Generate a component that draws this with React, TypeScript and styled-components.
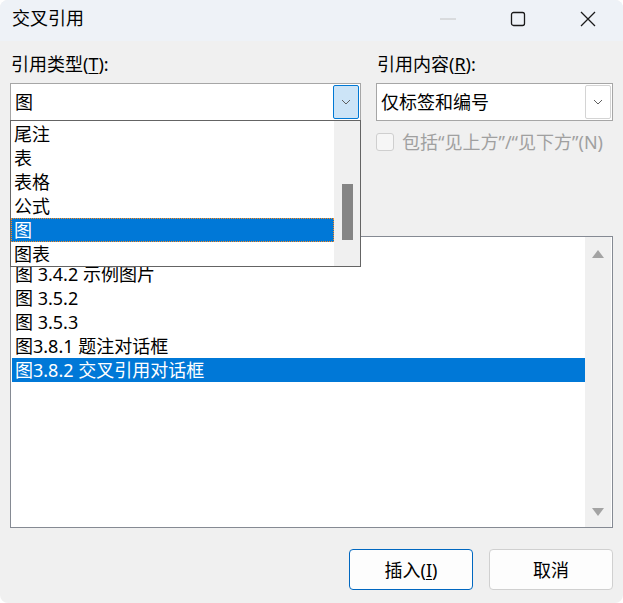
import styled, { createGlobalStyle } from "styled-components";

const GlobalStyle = createGlobalStyle`
  html, body {
    margin: 0;
    padding: 0;
    background: #ffffff;
  }
`;

const typeOptions = ["尾注", "表", "表格", "公式", "图", "图表"];
const captions = [
  "图 3.4.2 示例图片",
  "图 3.5.2",
  "图 3.5.3",
  "图3.8.1 题注对话框",
  "图3.8.2 交叉引用对话框",
];

function Chevron() {
  return (
    <svg width="10" height="6" viewBox="0 0 10 6">
      <path d="M1 1 L5 5 L9 1" fill="none" stroke="#606060" strokeWidth="1" />
    </svg>
  );
}

export default function App() {
  return (
    <>
      <GlobalStyle />
      <Window>
        <TitleBar>
          <Title>交叉引用</Title>
          <CaptionButton>
            <svg width="16" height="2" viewBox="0 0 16 2">
              <line x1="0" y1="1" x2="16" y2="1" stroke="#c4c4c4" strokeWidth="1" />
            </svg>
          </CaptionButton>
          <CaptionButton>
            <svg width="16" height="16" viewBox="0 0 16 16">
              <rect x="1.5" y="1.5" width="13" height="13" rx="2" fill="none" stroke="#1a1a1a" strokeWidth="1.3" />
            </svg>
          </CaptionButton>
          <CaptionButton>
            <svg width="16" height="16" viewBox="0 0 16 16">
              <path d="M1 1 L15 15 M15 1 L1 15" stroke="#1a1a1a" strokeWidth="1.3" />
            </svg>
          </CaptionButton>
        </TitleBar>

        <Body>
          <TopRow>
            <Column $width={351}>
              <Label>
                引用类型(<u>T</u>):
              </Label>
              <Combo>
                <ComboText>图</ComboText>
                <ComboButton $active>
                  <Chevron />
                </ComboButton>
                <Dropdown>
                  <DropItems>
                    {typeOptions.map((o) => (
                      <DropItem key={o} $selected={o === "图"}>
                        {o}
                      </DropItem>
                    ))}
                  </DropItems>
                  <DropScroll>
                    <Thumb />
                  </DropScroll>
                </Dropdown>
              </Combo>
            </Column>
            <Column $width={237}>
              <Label>
                引用内容(<u>R</u>):
              </Label>
              <Combo>
                <ComboText>仅标签和编号</ComboText>
                <ComboButton>
                  <Chevron />
                </ComboButton>
              </Combo>
              <CheckRow>
                <CheckBox />
                <CheckText>包括“见上方”/“见下方”(N)</CheckText>
              </CheckRow>
            </Column>
          </TopRow>

          <ListBox>
            <ListItems>
              {captions.map((c, i) => (
                <ListItem key={c} $selected={i === captions.length - 1}>
                  {c}
                </ListItem>
              ))}
            </ListItems>
            <ListScroll>
              <svg width="12" height="8" viewBox="0 0 12 8">
                <path d="M6 0 L12 8 L0 8 Z" fill="#a3a3a3" />
              </svg>
              <svg width="12" height="8" viewBox="0 0 12 8">
                <path d="M0 0 L12 0 L6 8 Z" fill="#a3a3a3" />
              </svg>
            </ListScroll>
          </ListBox>

          <ButtonRow>
            <Button $primary>
              插入(<u>I</u>)
            </Button>
            <Button>取消</Button>
          </ButtonRow>
        </Body>
      </Window>
    </>
  );
}

const Window = styled.div`
  width: 623px;
  height: 603px;
  background: #f0f0f0;
  border-radius: 8px;
  overflow: hidden;
  display: flex;
  flex-direction: column;
  font-family: "Noto Sans", "Noto Sans CJK SC", sans-serif;
  font-size: 18px;
  color: #000;
`;

const TitleBar = styled.div`
  height: 41px;
  flex-shrink: 0;
  background: #eef2f7;
  display: flex;
  align-items: center;
  padding-left: 12px;
`;

const Title = styled.div`
  flex: 1;
  line-height: 24px;
  margin-top: -5px;
`;

const CaptionButton = styled.div`
  width: 70px;
  height: 41px;
  display: flex;
  align-items: center;
  justify-content: center;
  margin-top: -4px;
`;

const Body = styled.div`
  display: flex;
  flex-direction: column;
  padding: 11px 10px 0 10px;
`;

const TopRow = styled.div`
  display: flex;
  gap: 15px;
`;

const Column = styled.div<{ $width: number }>`
  width: ${(p) => p.$width}px;
  display: flex;
  flex-direction: column;
`;

const Label = styled.div`
  height: 24px;
  line-height: 24px;
  margin-bottom: 7px;
  padding-left: 1px;

  u {
    text-underline-offset: 2px;
  }
`;

const Combo = styled.div`
  position: relative;
  box-sizing: border-box;
  height: 38px;
  border: 1px solid #a6a6a6;
  background: #fff;
  display: flex;
  align-items: center;
`;

const ComboText = styled.div`
  flex: 1;
  padding-left: 4px;
  line-height: 24px;
`;

const ComboButton = styled.div<{ $active?: boolean }>`
  box-sizing: border-box;
  width: 26px;
  height: 34px;
  margin-right: 1px;
  border-radius: 2px;
  border: 1px solid ${(p) => (p.$active ? "#0078d4" : "#d4d4d4")};
  background: ${(p) => (p.$active ? "#cce4f7" : "#ffffff")};
  display: flex;
  align-items: center;
  justify-content: center;
`;

const Dropdown = styled.div`
  position: absolute;
  top: 100%;
  left: -1px;
  width: 351px;
  box-sizing: border-box;
  border: 1px solid #646464;
  padding-top: 1px;
  background: #fff;
  display: flex;
  z-index: 2;
`;

const DropItems = styled.div`
  flex: 1;
  display: flex;
  flex-direction: column;
`;

const DropItem = styled.div<{ $selected?: boolean }>`
  height: 24px;
  line-height: 24px;
  padding-left: 3px;
  background: ${(p) => (p.$selected ? "#0078d7" : "transparent")};
  color: ${(p) => (p.$selected ? "#fff" : "#000")};
  outline: ${(p) => (p.$selected ? "1px dotted #ff8a1c" : "none")};
  outline-offset: -1px;
`;

const DropScroll = styled.div`
  width: 26px;
  background: #f0f0f0;
  display: flex;
  justify-content: center;
  padding-top: 63px;
  box-sizing: border-box;
  margin-top: -1px;
`;

const Thumb = styled.div`
  width: 11px;
  height: 56px;
  background: #858585;
`;

const CheckRow = styled.div`
  display: flex;
  align-items: center;
  height: 24px;
  margin-top: 9px;
`;

const CheckBox = styled.div`
  flex-shrink: 0;
  width: 18px;
  height: 18px;
  box-sizing: border-box;
  border: 1px solid #cfcfcf;
  border-radius: 3px;
  background: #f6f6f6;
`;

const CheckText = styled.div`
  margin-left: 8px;
  color: #a0a0a0;
  line-height: 24px;
  white-space: nowrap;
`;

const ListBox = styled.div`
  margin-top: 82px;
  height: 292px;
  box-sizing: border-box;
  border: 1px solid #858a93;
  background: #fff;
  display: flex;
  padding: 1px 0 1px 1px;
`;

const ListItems = styled.div`
  flex: 1;
  display: flex;
  flex-direction: column;
  padding-top: 24px;
`;

const ListItem = styled.div<{ $selected?: boolean }>`
  height: 24px;
  line-height: 24px;
  padding-left: 3px;
  white-space: nowrap;
  background: ${(p) => (p.$selected ? "#0078d7" : "transparent")};
  color: ${(p) => (p.$selected ? "#fff" : "#000")};
`;

const ListScroll = styled.div`
  width: 26px;
  margin-right: 1px;
  margin-top: -1px;
  margin-bottom: -1px;
  background: #f0f0f0;
  display: flex;
  flex-direction: column;
  align-items: center;
  justify-content: space-between;
  padding: 13px 0 11px;
`;

const ButtonRow = styled.div`
  display: flex;
  justify-content: flex-end;
  gap: 16px;
  margin-top: 21px;
`;

const Button = styled.div<{ $primary?: boolean }>`
  width: 124px;
  height: 41px;
  box-sizing: border-box;
  border: 1px solid ${(p) => (p.$primary ? "#0067c0" : "#d0d0d0")};
  border-radius: 4px;
  background: #fdfdfd;
  display: flex;
  align-items: center;
  justify-content: center;
  line-height: 24px;

  u {
    text-underline-offset: 2px;
  }
`;
